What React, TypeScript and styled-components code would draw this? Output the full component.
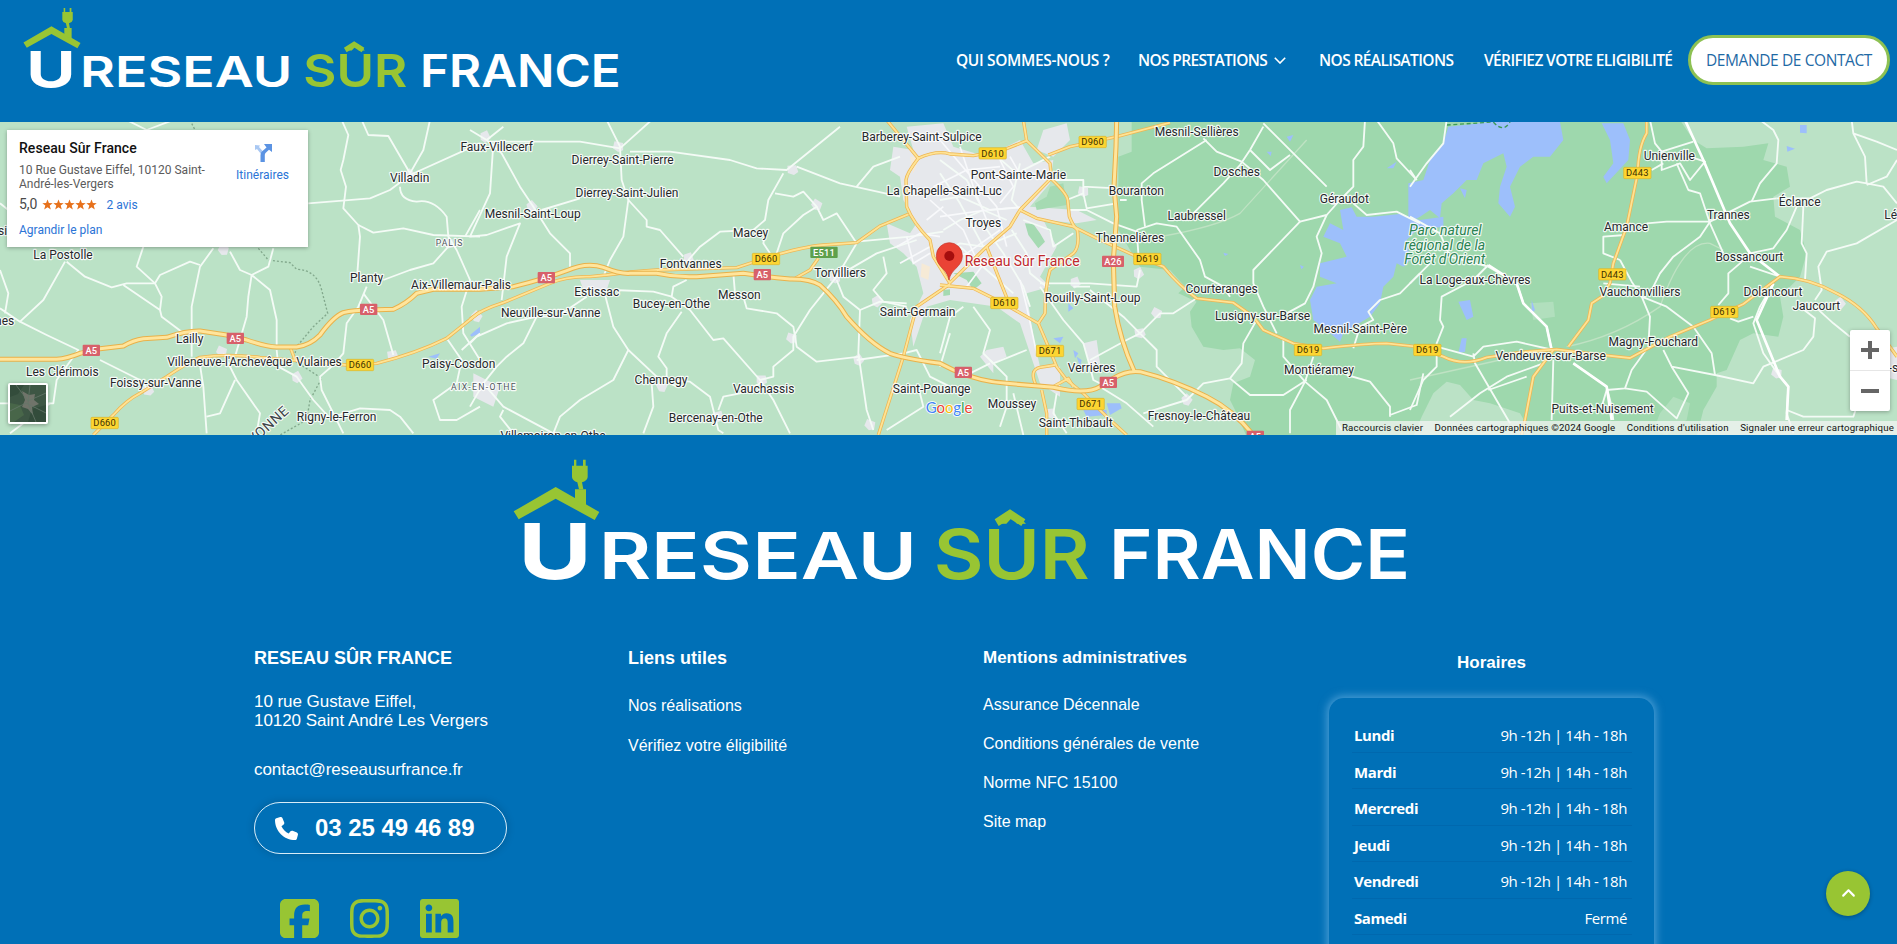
import React from "react";
import styled, { createGlobalStyle } from "styled-components";
import { FaSquareFacebook, FaInstagram, FaLinkedin, FaPhone, FaAngleUp } from "react-icons/fa6";

const BLUE = "#0070b7";
const GREEN = "#98c533";

const GlobalStyle = createGlobalStyle`
  * { box-sizing: border-box; }
  html, body { margin: 0; padding: 0; overflow: hidden; }
  body { background: ${BLUE}; font-family: "Liberation Sans", Arial, sans-serif; color: #fff; }
  a { color: inherit; text-decoration: none; }
`;

const Page = styled.div`
  position: relative;
  height: 944px;
  overflow: hidden;
  display: flex;
  flex-direction: column;
`;

/* ---------- header ---------- */

const Header = styled.header`
  flex: none;
  height: 122px;
  display: flex;
  justify-content: space-between;
  padding: 0 7px 0 23px;
  background: ${BLUE};
`;

const HeaderLogo = styled.div`
  padding-top: 7px;
`;

const LogoArt = styled.svg`
  display: block;
  overflow: visible;
`;

const Nav = styled.nav`
  display: flex;
  align-items: center;
  padding-bottom: 2px;
  font-family: "Open Sans", "Noto Sans", sans-serif;
  font-size: 15.5px;
  font-weight: 600;
`;

const NavLink = styled.a<{ $width: number; $spacing: number }>`
  display: flex;
  align-items: center;
  gap: 7px;
  width: ${(p) => p.$width}px;
  white-space: nowrap;
  letter-spacing: ${(p) => p.$spacing}px;
`;

const ContactButton = styled.a`
  display: flex;
  align-items: center;
  justify-content: center;
  width: 202px;
  height: 50px;
  border: 3px solid #8dc153;
  border-radius: 25px;
  background: #fff;
  color: #1f6aa5;
  font-weight: 400;
  white-space: nowrap;
  letter-spacing: -0.4px;
`;

/* ---------- map ---------- */

const MapFrame = styled.section`
  position: relative;
  flex: none;
  height: 313px;
  overflow: hidden;
  background: #bbe2c6;
  font-family: Roboto, sans-serif;
`;

const MapCanvas = styled.svg`
  display: block;
  width: 1897px;
  height: 313px;
`;

const PlaceCard = styled.div`
  position: absolute;
  left: 7px;
  top: 8px;
  width: 301px;
  height: 117px;
  padding: 10px 19px 0 12px;
  display: flex;
  justify-content: space-between;
  background: #fff;
  box-shadow: 0 1px 4px rgba(0, 0, 0, 0.3);
`;

const PlaceName = styled.div`
  font-size: 14px;
  line-height: 16px;
  font-weight: 500;
  color: #111;
  letter-spacing: 0.05px;
`;

const PlaceAddress = styled.div`
  width: 200px;
  margin-top: 7px;
  font-size: 12px;
  line-height: 14px;
  color: #5b5b5b;
`;

const Rating = styled.div`
  display: flex;
  align-items: center;
  margin-top: 5px;
  font-size: 14px;
  line-height: 17px;
  color: #4a4a4a;
`;

const Stars = styled.svg`
  width: 55px;
  height: 11px;
  margin: 0 10px 0 4px;
`;

const MapLink = styled.a`
  font-size: 12px;
  line-height: 14px;
  color: #2b74d6;
`;

const Enlarge = styled(MapLink)`
  display: block;
  margin-top: 10px;
`;

const Directions = styled.div`
  display: flex;
  flex-direction: column;
  align-items: center;
  gap: 6px;
  padding-top: 3px;
`;

const Thumb = styled.div`
  position: absolute;
  left: 8px;
  top: 261px;
  width: 40px;
  height: 41px;
  border: 2px solid #fff;
  border-radius: 2px;
  overflow: hidden;
  box-shadow: 0 1px 4px rgba(0, 0, 0, 0.35);
`;

const ZoomControl = styled.div`
  position: absolute;
  right: 7px;
  top: 208px;
  width: 40px;
  height: 81px;
  display: flex;
  flex-direction: column;
  background: #fff;
  border-radius: 2px;
  box-shadow: 0 1px 4px rgba(0, 0, 0, 0.3);
`;

const ZoomButton = styled.div`
  flex: 1;
  display: flex;
  align-items: center;
  justify-content: center;
  & + & { border-top: 1px solid #e6e6e6; }
`;

const Attribution = styled.div`
  position: absolute;
  right: 0;
  bottom: 0;
  width: 561px;
  height: 14px;
  padding: 0 3px 2px 6px;
  display: flex;
  justify-content: space-between;
  align-items: center;
  background: rgba(245, 245, 245, 0.72);
  color: #111;
  font-size: 9.7px;
  letter-spacing: 0.15px;
  white-space: nowrap;
`;

/* ---------- footer ---------- */

const Footer = styled.footer`
  flex: 1;
  background: ${BLUE};
`;

const FooterLogo = styled.div`
  padding: 23px 0 0 513px;
  height: 210px;
`;

const Columns = styled.div`
  display: grid;
  grid-template-columns: 374px 355px 346px 325px;
  padding-left: 254px;
  align-items: start;
`;

const Column = styled.div`
  display: flex;
  flex-direction: column;
  align-items: flex-start;
`;

const Heading = styled.h4<{ $size?: number }>`
  margin: 3px 0 0;
  font-size: ${(p) => p.$size ?? 17}px;
  line-height: 20px;
  font-weight: 700;
  white-space: nowrap;
`;

const Address = styled.p`
  margin: 24px 0 0;
  font-size: 17px;
  line-height: 19px;
  white-space: nowrap;
  letter-spacing: -0.05px;
`;

const Mail = styled.a`
  margin-top: 30px;
  font-size: 17px;
  line-height: 19px;
  letter-spacing: -0.05px;
`;

const PhonePill = styled.a`
  display: flex;
  align-items: center;
  width: 253px;
  height: 52px;
  margin-top: 23px;
  padding-left: 20px;
  gap: 17px;
  border: 1px solid #d7ecf8;
  border-radius: 26px;
  box-shadow: 0 0 8px rgba(0, 0, 0, 0.18);
  font-size: 24px;
  font-weight: 700;
  white-space: nowrap;
  letter-spacing: -0.05px;
`;

const Social = styled.div`
  display: flex;
  gap: 31px;
  margin: 42px 0 0 26px;
  color: ${GREEN};
  svg { width: 39px; height: 45px; display: block; }
`;

const Links = styled.div<{ $gap: number; $top: number }>`
  display: flex;
  flex-direction: column;
  margin-top: ${(p) => p.$top}px;
  gap: ${(p) => p.$gap}px;
  font-size: 16px;
  line-height: 19px;
  white-space: nowrap;
`;

const HoursColumn = styled.div`
  display: flex;
  flex-direction: column;
  align-items: center;
  padding-top: 5px;
`;

const HoursCard = styled.div`
  width: 325px;
  height: 320px;
  margin-top: 25px;
  padding: 18px 22px 0 23px;
  border-radius: 15px;
  box-shadow: 0 0 8px 2px rgba(150, 205, 245, 0.5);
  font-family: "Open Sans", "Noto Sans", sans-serif;
  font-size: 15px;
`;

const HoursRow = styled.div`
  display: flex;
  justify-content: space-between;
  align-items: center;
  height: 36.5px;
  padding: 3px 5px 0 2px;
  border-bottom: 1px solid rgba(0, 60, 120, 0.14);
  letter-spacing: -0.4px;
`;

const Day = styled.span`
  font-weight: 700;
`;

const ScrollTop = styled.a`
  position: absolute;
  left: 1826px;
  top: 871px;
  width: 44px;
  height: 45px;
  display: flex;
  align-items: center;
  justify-content: center;
  border-radius: 50%;
  background: ${GREEN};
  box-shadow: 0 1px 4px rgba(0, 0, 0, 0.3);
`;

/* ---------- logo ---------- */

function Logo({ width }: { width: number }) {
  return (
    <LogoArt width={width} height={(width * 126) / 896} viewBox="24 24 2688 378" fontFamily="Inter, sans-serif">
      <g fill={GREEN}>
        <path d="M26 184 L152 111 L283 186 L269 210 L152 146 L41 208 Z" />
        <path d="M210 150 V118 H243 V170 Z" />
        <path d="M207 29 H214 V47 H234 V29 H242 V47 H248 V82 Q246 93 231 97 L235 118 H222 L217 97 Q203 93 201 82 V47 H207 Z" />
        <path d="M1515 178 L1561 208 L1549 228 L1515 206 L1481 228 L1469 208 Z" />
      </g>
      <g fill="#fff">
        <text x="39" y="388" fontSize="230" fontWeight="700" textLength="222" lengthAdjust="spacingAndGlyphs">U</text>
        <text x="281" y="386" fontSize="193" fontWeight="600" textLength="955" lengthAdjust="spacingAndGlyphs">RESEAU</text>
        <text x="1812" y="386" fontSize="205" fontWeight="600" textLength="903" lengthAdjust="spacingAndGlyphs">FRANCE</text>
      </g>
      <text x="1286" y="386" fill={GREEN} fontSize="205" fontWeight="600" textLength="468" lengthAdjust="spacingAndGlyphs">SÛR</text>
    </LogoArt>
  );
}

/* ---------- map drawing: four tiles, three units per pixel ---------- */

const TILE = [0, 1410, 2820, 4230];

const MINOR: string[][] = [
  [
    "M1025 0 L1045 45 L1030 120 L1022 150 L1038 200 L1030 265 L1075 315 L1080 350 L1072 460",
    "M1085 0 L1105 45 L1165 48 L1230 160 L1270 90 L1290 0",
    "M1440 70 L1230 165 L1170 210 L1110 235 L925 250",
    "M1200 200 Q1200 240 1250 245 Q1300 235 1340 290 L1345 350 L1370 390 L1410 480 L1385 560 L1390 640 L1440 720",
    "M1075 315 L1120 338 L1210 325 L1300 345 L1440 350",
    "M1345 380 L1300 430 L1230 450 L1150 480 M1440 270 L1395 350",
    "M1100 500 L1075 560 L1040 610 L1030 700 L1000 735 L960 770 L965 810 L1030 940",
    "M1090 520 L1150 600 L1180 705",
    "M200 425 L255 470 L335 502 L380 490 L465 490 L480 465 L570 425 L600 435",
    "M195 425 L130 540 L60 605 L140 645 L235 690 L170 780 L160 850 L0 850",
    "M60 605 L0 565 M0 450 L25 520 L15 580",
    "M370 495 L480 570 L485 590 L545 635 M465 490 L485 530 L480 570 M430 380 L410 440 L465 490",
    "M640 385 L600 440 L575 560 L575 710",
    "M690 395 L720 450 L755 465 L745 530 L740 590 L705 710 M755 465 L810 510 L830 600 L830 680",
    "M755 465 L805 440 L820 385",
    "M300 720 L420 780 L445 810 M150 850 L30 940",
    "M600 735 L610 800 L620 940 M670 700 L710 780 L780 880 L770 940 M705 780 L660 880 L620 890",
    "M830 690 L835 740 L890 770 L940 840 L985 890",
    "M1000 890 L1080 865 L1170 870 L1200 890 L1240 940",
    "M1340 655 L1385 720 L1370 790 L1300 840 L1320 900 L1370 900 L1440 860",
    "M1440 640 L1385 690 M0 250 L25 270 M380 0 L440 30 L520 0",
  ],
  [
    "M0 30 L50 60 L95 100 L150 200 L190 260 L215 300 L240 340 L300 400 L300 440",
    "M50 60 L100 20 M60 65 L330 65 L450 85 L545 0 M410 0 L450 80 L455 180 L475 240 L460 350 L420 420 L400 470",
    "M480 95 L600 95 L780 120 L860 145 L950 150 L1110 20",
    "M940 160 L895 240 L885 300 L850 330 L750 335 L690 380 L655 420",
    "M980 140 L1110 190 L1290 230 M1160 200 L1210 140 L1290 110",
    "M915 220 L970 230 L1000 215 L1040 260 L1000 285 L940 340 L920 400 M885 340 L880 370 L900 400",
    "M1040 260 L1060 300 L1100 280 L1160 370 L1100 470 L1020 570 L970 650 L970 690 L910 740 L910 770 L870 780",
    "M1160 365 L1320 350 L1420 335 M1100 470 L1220 400 L1340 360",
    "M1100 480 L1120 530 L1170 570 L1165 700 L1190 870 L1210 930",
    "M1170 570 L1230 545 L1310 550 M1170 710 L1040 725 L980 680 L970 620 L920 580 L830 565 L820 530 L795 520 L790 460",
    "M1160 720 L1300 700 L1340 690 L1380 770 L1440 800",
    "M650 480 L610 500 L605 530 L660 570 L730 660 L760 655 L870 780 L910 840 L960 940",
    "M635 575 L590 640 L565 710 L590 745 L590 780 L660 785 L720 830 L745 930 L760 940",
    "M870 790 L810 820 L760 830 L745 870",
    "M400 505 L430 620 L475 690 L560 770 L620 800 M430 510 L550 515 L605 530",
    "M475 690 L430 780 L330 840 L270 890 L250 940",
    "M350 530 L260 590 L200 590 L160 670 L110 710 L80 740 L40 790",
    "M200 590 L110 610 L20 650 L0 670",
    "M40 790 L100 860 L250 940 M40 790 L0 860 M100 870 L90 890 L130 940",
    "M545 790 L550 860 L520 940",
    "M475 240 L530 300 L530 320 L570 330 L640 410 M215 270 L330 235",
    "M70 70 L60 220 L0 350 L50 345 L150 310 L110 410 L95 540",
    "M1345 800 L1360 860 L1250 930 M1410 740 L1440 640",
    "M1310 560 L1240 545 L1210 510 L1250 460 L1240 410",
  ],
  [
    "M800 60 L640 160 L605 190 L605 240 L615 320",
    "M790 55 L830 95 L905 125 L970 180 L1080 305 L940 450 L940 490 L970 560 L1010 640",
    "M970 10 L1160 200 M930 90 L970 20 M930 90 L990 150 L1050 105",
    "M930 90 L900 135 L850 190 L760 280",
    "M1080 305 L1160 285 L1200 240 L1240 200 L1240 120 L1270 80 L1275 0",
    "M1240 250 L1280 285 L1370 275 L1440 310",
    "M1160 285 L1130 350 L1145 400 L1120 500 L1095 550 L1040 580",
    "M1310 0 L1360 70 L1370 115 L1430 180",
    "M590 330 L650 310 L710 320 L780 420 L795 470 L850 500 L870 530",
    "M770 535 L700 580 L660 580 L600 640 L560 660 L450 720 M400 500 L450 500 M590 330 L595 400",
    "M950 600 L910 670 L905 730 L870 775 L790 790 L740 840 L610 880 M870 775 L930 825 L1030 825 L1100 780",
    "M1030 660 L1030 710 L1095 785 L1160 840 L1205 930 M1095 785 L1050 870 L1050 940 M1095 785 L1120 710",
    "M1220 765 L1290 785 L1350 860 L1350 890 M1350 885 L1430 855 L1450 760",
    "M1440 460 L1380 520 L1320 540 L1285 575 L1300 600 L1260 620 L1240 685",
    "M480 800 L560 850 L640 920 M300 500 L370 600 L430 670 L450 740 L460 780 L500 800",
    "M300 490 L450 490 L590 500 L600 450 M450 510 L550 590 L600 640 L650 690 L650 740 L740 830",
    "M240 130 L215 240 L240 270 M160 100 L230 160 L330 110 M0 120 L80 180 L130 270 L200 300",
    "M0 240 L60 230 L150 270 L240 262 M10 330 L60 300 L130 270 M0 400 L60 370 L130 380 L230 340",
    "M130 380 L60 250 L0 160 M120 300 L190 400 L250 500 L270 560 M60 380 L140 450 L220 520",
    "M340 180 L430 180 L430 220 L380 240 M430 220 L440 265 L530 250 M430 200 L530 205",
    "M385 270 L440 270 L520 310 L590 335 M540 240 L560 240",
    "M250 300 L330 330 L340 380 L400 340 M215 330 L260 400 L270 460 L320 500",
    "M70 560 L30 590 L0 700 M100 560 L150 630 L130 700 L160 730 L260 690",
    "M150 730 L90 760 M150 720 L200 770 L200 860 L180 920 M350 820 L340 880 L380 940 M220 820 L250 945",
  ],
  [
    "M110 0 L100 70 L50 130 L0 200 M0 290 L90 340 L120 410 L235 440 L320 490 L340 550 L410 620 L425 690",
    "M235 435 L190 480 L95 530 L90 600 L100 620 L80 670 L80 740 L40 780 L0 870",
    "M60 430 L0 490 M0 150 L20 180",
    "M720 0 L735 70 L755 95 L755 150 L810 130 L840 180 L885 125 L810 100",
    "M725 150 L760 130 M755 95 L850 65 M800 130 L835 210 L870 220 L900 310 L940 400",
    "M710 310 L770 305 L900 305 L1020 245 L1100 235 M900 305 L870 350 L790 410 L750 460 L720 520",
    "M1050 0 L1090 30 L1105 60 L1100 130 L1050 190 L1025 245",
    "M1100 235 L1200 235 L1250 210 L1340 185 L1370 190 L1365 110 L1330 40 L1325 0 M1370 190 L1420 200 L1461 250 M1330 40 L1400 65 L1461 90 M1370 195 L1430 170 L1461 120",
    "M1160 260 L1130 330 L1090 385 L1020 400 L990 430 L955 460 L955 520 L925 555",
    "M1180 260 L1175 370 L1190 400 L1185 480 M1461 300 L1340 370 L1250 395 L1225 440 L1235 510 L1215 540",
    "M1110 470 L1020 440 M1090 490 L1050 560 L1030 610 L1060 700 L1110 770 L1135 800 L1130 880 L1150 940",
    "M1170 560 L1215 595 L1210 650 L1180 690 L1060 740 L1030 790 L915 765 L785 740 L760 690",
    "M1215 560 L1270 610 L1320 650",
    "M960 595 L985 605 L1030 590",
    "M630 420 L665 485 L695 530 L720 590 L715 680 L665 750 L645 805 L590 810 M695 530 L770 560 L850 620 L905 700 L915 765",
    "M785 740 L835 820 L800 895 L710 815 L645 805 M580 490 L690 500",
    "M645 345 L580 350 L580 400 L630 420",
    "M490 730 L590 800 L605 860 L610 900 M590 810 L575 860 M430 720 L425 900",
    "M190 700 L195 730 L300 910 M190 710 L220 680 L320 665 L430 690 M80 680 L190 710",
    "M400 730 L290 770 L210 820 L120 890 M350 770 L235 810",
    "M1130 870 L1180 890 L1330 890 L1340 860",
  ],
];

const MAJOR: string[][] = [
  ["M280 945 L340 885 Q380 840 420 820 L500 770 Q560 730 600 712 Q680 700 780 712 L1040 735 L1130 730 Q1250 700 1340 655 L1440 575", "M870 680 L885 720"],
  [
    "M0 598 Q30 570 100 548 L240 490 Q290 468 360 470 L410 465 Q480 455 560 450 L800 443 L900 410 Q1000 380 1060 375 L1160 368 L1230 318 L1315 283",
    "M975 475 L1020 450 L1045 415",
    "M1250 0 L1345 115 Q1310 160 1308 180 L1310 260 Q1330 310 1380 360 L1390 410 L1440 490",
    "M1345 115 Q1400 90 1440 102 L1510 107 L1600 90 L1670 62 L1660 0",
    "M1225 945 L1300 710 L1340 560 L1440 492",
  ],
  [
    "M260 62 Q310 110 330 130 L335 178 Q380 220 383 240 L388 290 Q400 320 412 330 Q420 380 400 400 L330 450 Q315 500 315 580 L295 610",
    "M325 105 L390 80 L530 50 L690 8",
    "M330 178 L240 270 L210 320 L140 380 L28 490",
    "M0 495 L100 505 L190 550 L295 610 L325 680 L350 740 L380 780 L430 820 L500 890 L560 945",
    "M240 270 L290 295 L400 320 L470 355 L580 405 L670 440 Q720 500 770 535 L880 548 L940 590 L970 630 L1060 670 L1150 685 Q1280 670 1340 670 L1430 680 L1510 710 Q1570 740 1640 712 L1740 697 L1850 688 L1970 703 L2070 714 L2190 650 L2310 600 L2410 552 L2520 470 Q2610 475 2690 520 Q2770 560 2810 625 L2871 710",
    "M140 380 L175 470 L205 545",
    "M320 945 L320 880 L305 810 M290 800 Q265 750 300 742 L345 735 M340 800 L385 775 L400 800",
  ],
  [
    "M710 0 L710 40 Q685 80 683 160 L650 320 L610 430 L600 490 L575 530 L545 550 L535 600 L475 680",
    "M430 690 L370 770 L345 900 L335 945",
  ],
];

const MOTORWAY =
  "M0 718 L170 718 Q200 716 240 700 L300 686 L370 678 Q400 660 430 656 L500 652 Q560 632 600 633 L680 645 L740 660 Q800 680 830 681 L890 681 Q930 676 960 645 Q1000 590 1030 578 Q1060 570 1110 570 L1180 568 Q1220 550 1250 520 L1300 508 L1440 508 L1540 500 Q1640 475 1700 452 Q1760 425 1810 442 Q1860 462 1890 460 L1970 460 Q2030 473 2090 470 L2230 460 Q2310 472 2370 477 Q2430 476 2460 495 Q2510 540 2540 590 Q2610 670 2670 700 Q2710 715 2820 730 L2860 750 Q2940 785 3020 790 L3160 802 Q3260 825 3300 800 L3340 775 Q3380 750 3420 755 Q3520 780 3620 830 Q3700 870 3760 945 M3350 0 L3348 80 L3342 200 L3350 290 L3340 420 L3344 560 Q3360 660 3402 752";

type Spot = [tile: number, x: number, y: number, name: string];

const TOWNS: Spot[] = [
  [0, 1229, 186, "Villadin"], [0, 1100, 485, "Planty"], [0, 689, 739, "Villeneuve-l'Archevêque"], [0, 957, 739, "Vulaines"],
  [0, 187, 768, "Les Clérimois"], [0, 467, 801, "Foissy-sur-Vanne"], [0, 569, 670, "Lailly"], [0, 189, 417, "La Postolle"],
  [0, 1010, 902, "Rigny-le-Ferron"], [0, 14, 615, "nes"], [0, 8, 344, "si"],
  [1, 80, 93, "Faux-Villecerf"], [1, -27, 507, "Aix-Villemaur-Palis"], [1, -34, 744, "Paisy-Cosdon"],
  [1, 458, 132, "Dierrey-Saint-Pierre"], [1, 471, 231, "Dierrey-Saint-Julien"], [1, 188, 294, "Mesnil-Saint-Loup"],
  [1, 842, 351, "Macey"], [1, 662, 444, "Fontvannes"], [1, 1110, 471, "Torvilliers"], [1, 380, 528, "Estissac"],
  [1, 808, 537, "Messon"], [1, 604, 564, "Bucey-en-Othe"], [1, 242, 591, "Neuville-sur-Vanne"], [1, 573, 792, "Chennegy"],
  [1, 881, 818, "Vauchassis"], [1, 737, 905, "Bercenay-en-Othe"], [1, 249, 959, "Villemoiron-en-Othe"],
  [1, 1355, 63, "Barberey-Saint-Sulpice"], [1, 1423, 225, "La Chapelle-Saint-Luc"], [1, 1343, 588, "Saint-Germain"],
  [1, 1385, 818, "Saint-Pouange"],
  [2, 235, 177, "Pont-Sainte-Marie"], [2, 130, 321, "Troyes"], [2, 589, 225, "Bouranton"], [2, 770, 48, "Mesnil-Sellières"],
  [2, 890, 168, "Dosches"], [2, 1213, 249, "Géraudot"], [2, 770, 300, "Laubressel"], [2, 570, 366, "Thennelières"],
  [2, 845, 519, "Courteranges"], [2, 458, 546, "Rouilly-Saint-Loup"], [2, 968, 600, "Lusigny-sur-Barse"],
  [2, 1261, 639, "Mesnil-Saint-Père"], [2, 455, 756, "Verrières"], [2, 1137, 762, "Montiéramey"], [2, 216, 864, "Moussey"],
  [2, 777, 900, "Fresnoy-le-Château"], [2, 407, 921, "Saint-Thibault"],
  [3, 778, 120, "Unienville"], [3, 1169, 258, "Éclance"], [3, 955, 297, "Trannes"], [3, 648, 333, "Amance"],
  [3, 1018, 423, "Bossancourt"], [3, 195, 492, "La Loge-aux-Chèvres"], [3, 690, 528, "Vauchonvilliers"],
  [3, 1089, 528, "Dolancourt"], [3, 1219, 570, "Jaucourt"], [3, 730, 678, "Magny-Fouchard"],
  [3, 422, 720, "Vendeuvre-sur-Barse"], [3, 578, 879, "Puits-et-Nuisement"], [3, 1442, 297, "Lé"], [3, 1450, 756, "-s"],
];

const SHIELDS: Spot[] = [
  [0, 1080, 735, "D660"], [0, 314, 909, "D660"], [1, 888, 417, "D660"], [0, 274, 691, "A5"], [0, 706, 655, "A5"],
  [0, 1106, 568, "A5"], [1, 229, 473, "A5"], [1, 877, 464, "A5"], [2, 70, 757, "A5"], [2, 505, 787, "A5"], [2, 946, 949, "A5"],
  [1, 1062, 397, "E511"], [2, 158, 100, "D610"], [2, 193, 549, "D610"], [2, 458, 66, "D960"], [2, 519, 424, "A26"],
  [2, 622, 417, "D619"], [2, 330, 693, "D671"], [2, 452, 852, "D671"], [2, 1104, 690, "D619"], [3, 682, 159, "D443"],
  [3, 607, 463, "D443"], [3, 943, 576, "D619"], [3, 52, 690, "D619"],
];

const VILLAGES: [tile: number, x: number, y: number][] = [
  [0, 445, 812], [0, 665, 695], [0, 890, 772], [0, 1345, 370], [0, 1230, 165], [0, 1178, 706],
  [0, 670, 390], [1, 45, 50], [1, 445, 80], [1, 185, 260], [1, 968, 150], [1, 1040, 255], [1, 655, 415],
  [1, 965, 655], [1, 1165, 720], [1, 875, 780], [1, 575, 800], [1, 745, 890], [1, 1200, 915],
  [1, 1220, 545], [1, 1095, 475], [1, 20, 590], [2, 600, 640], [2, 650, 580], [2, 595, 460], [2, 430, 215],
  [2, 740, 840], [2, 330, 880], [2, 1180, 240], [2, 405, 488], [3, 1100, 760], [3, 1290, 550],
];

function Shield({ spot }: { spot: Spot }) {
  const [tile, x, y, name] = spot;
  const local = name[0] === "D";
  const w = name.length === 4 ? 82 : name.length === 3 ? 66 : 52;
  const fill = local ? "#fdd532" : name[0] === "E" ? "#5ea04c" : "#d7606a";
  return (
    <g transform={`translate(${TILE[tile] + x} ${y})`}>
      <rect x={-w / 2} y={-17} width={w} height={34} rx={3} fill={fill} stroke={local ? "#d9b52a" : fill} strokeWidth={local ? 2 : 0} />
      <text y={10} textAnchor="middle" fontSize={28} fontWeight={local ? 400 : 500} letterSpacing={0.6} fill={local ? "#3d3000" : "#fff"}>{name}</text>
    </g>
  );
}

function MapDrawing() {
  return (
    <MapCanvas viewBox="0 6 5691 939" preserveAspectRatio="none" fontFamily="Roboto, sans-serif">
      <g fill="#9ed8ad">
        <path d="M3395 0 L3395 95 L3355 110 L3355 330 L3420 440 L3510 450 L3555 500 L3535 520 L3590 545 L3570 575 L3575 620 L3610 680 L3670 690 L3720 685 L3765 720 L3750 770 L3700 790 L3690 840 L3710 880 L3740 950 L4240 950 L4265 890 L4300 820 L4340 785 L4380 795 L4420 840 L4470 850 L4560 880 L4600 950 L5090 950 L5110 870 L5150 800 L5150 760 L5180 750 L5220 660 L5260 640 L5335 650 L5350 590 L5340 530 L5400 470 L5420 400 L5400 330 L5325 290 L5320 230 L5370 200 L5360 140 L5290 120 L5305 70 L5230 80 L5120 85 L5080 60 L5040 0 Z" />
      </g>
      <path d="M4980 880 L5020 830 L5070 850 L5060 900 L5000 945 L4960 930 Z M4590 550 L4660 545 L4665 590 L4600 600 Z" fill="#b1dfbd" />
      <g fill="#e6e8ec">
        <path d="M2720 20 L2830 10 L2860 80 L2960 110 L3060 60 L3100 130 L3160 120 L3150 190 L3090 260 L3230 270 L3290 300 L3230 310 L3130 300 L3170 380 L3120 470 L3150 500 L3080 520 L3100 650 L3120 740 L3180 740 L3180 830 L3120 790 L3060 610 L2990 560 L2850 540 L2780 560 L2740 680 L2730 600 L2770 520 L2750 440 L2710 400 L2670 370 L2660 310 L2730 340 L2750 310 L2710 240 L2700 170 L2670 150 L2680 80 L2740 90 Z" />
        <path d="M1740 480 L1830 480 L1820 510 L1750 510 Z M1420 760 L1500 800 L1480 860 L1420 830 Z M3130 30 L3200 10 L3210 60 L3160 110 L3110 90 Z M2960 690 L3010 680 L3020 710 L2980 730 L2980 760 L2940 710 Z M3250 670 L3290 660 L3300 730 L3270 740 Z M5640 690 L5691 680 L5691 780 L5650 770 Z" />
        {VILLAGES.map(([t, x, y], i) => (
          <path key={i} transform={`translate(${TILE[t] + x} ${y}) rotate(${(i * 37) % 90}) scale(0.8)`} d="M-22 -12 L10 -20 L22 4 L8 18 L-16 14 Z" />
        ))}
      </g>
      <path d="M3075 310 L3100 312 L3120 340 L3135 365 L3115 385 L3085 345 Z M3105 250 L3140 230 L3150 200 L3190 190 L3200 255 L3110 270 Z" fill="#a5dab2" />
      <path d="M2860 460 L2920 455 L2945 490 L2920 510 L2900 480 Z M2830 510 L2850 508 L2850 525 L2830 528 Z" fill="#a5dab2" />
      <path d="M2765 430 L2790 440 L2785 480 L2762 470 Z M2730 110 L2760 110 L2740 160 Z" fill="#f6ead6" />
      <g fill="#9dbffb">
        <path d="M4345 20 L4420 12 L4470 6 L4680 6 L4690 60 L4650 110 L4600 110 L4560 140 L4530 200 L4545 260 L4530 290 L4495 250 L4500 200 L4520 140 L4510 100 L4450 130 L4430 180 L4400 180 L4360 220 L4325 250 L4320 295 L4290 270 L4260 290 L4225 310 L4225 190 L4270 180 L4290 120 L4330 70 Z" />
        <path d="M4805 10 L4870 10 L4890 60 L4885 120 L4820 190 L4810 170 L4840 130 L4830 60 Z" />
        <path d="M4020 270 L4055 262 L4070 290 L4120 290 L4200 282 L4260 300 L4330 290 L4330 320 L4250 330 L4220 360 L4230 420 L4210 440 L4190 430 L4180 470 L4150 500 L4140 550 L4110 590 L4060 620 L4030 640 L4020 665 L3990 640 L3940 600 L3930 540 L3950 500 L4010 490 L3960 470 L3960 430 L4040 410 L4020 370 L3970 350 L3990 310 L4030 330 Z" />
        <path d="M4375 545 L4410 540 L4420 590 L4400 600 Z M4595 540 L4605 570 L4595 580 Z M4385 655 L4400 655 L4395 695 L4375 700 Z M5400 15 L5420 15 L5420 40 L5400 38 Z M5360 78 L5385 86 L5362 95 Z M4380 205 L4400 210 L4395 235 Z" />
        <path d="M3320 850 L3360 850 L3365 865 L3330 885 Z M3250 870 L3320 870 L3320 885 L3260 890 Z M3220 690 L3235 700 L3225 715 Z M3160 655 L3190 650 L3180 670 Z M3205 550 L3220 565 L3205 575 Z M3230 710 L3245 720 L3240 740 Z" />
        <path d="M1440 620 L1410 645 L1415 650 L1440 640 Z M1285 710 L1320 700 L1310 716 Z M4160 145 L4190 125 L4180 145 Z M3860 50 L3880 45 L3870 65 Z M3800 95 L3815 95 L3812 108 Z M3900 435 L3912 440 L3904 448 Z M3670 398 L3685 402 L3675 408 Z" />
      </g>
      <path d="M4230 780 L4500 720 M4700 680 Q4850 650 4980 560 Q5050 360 5130 370 L5170 390 M3480 350 Q3650 320 3720 280 L3920 60" fill="none" stroke="#bfe2c3" strokeWidth="4" />
      <path d="M570 0 L600 60 M775 385 L805 420 L870 428 L890 448 Q950 450 965 510 L983 580 L940 620 L890 680 L880 720 L965 775 L930 840 L920 900 L840 945" fill="none" stroke="#82a88c" strokeWidth="4" strokeDasharray="6 6" />
      <path d="M4340 15 L4420 10 L4480 6 Q4510 40 4530 6" fill="none" stroke="#3f9a5a" strokeWidth="4" strokeDasharray="12 8" />

      {MINOR.map((paths, t) => (
        <g key={t} transform={`translate(${TILE[t]} 0)`} fill="none" stroke="#f4fbf6" strokeWidth={5.5} strokeLinejoin="round">
          {paths.map((d) => <path key={d} d={d} />)}
        </g>
      ))}
      <path d="M5055 0 L5110 120 L5190 310 L5250 400 L5340 470 M4465 435 L4550 490 L4570 550 L4640 620 L4655 690 M4720 730 L4820 800 L4835 900 M5320 490 L5270 600 L5340 770 L5365 800 L5360 900" fill="none" stroke="#fff" strokeWidth="8" strokeLinejoin="round" />
      <g fill="none" stroke="#f8f9fb" strokeWidth="5">
        <path d="M2820 60 L2990 260 L3020 380 M2880 80 L2920 200 L2960 300 M2800 200 L2900 150 L3000 140 M2820 290 L2960 270 L3060 262 M2830 420 L2900 400 L3000 330 M2790 240 L2890 330 L2930 420 M2900 500 L2960 420 L3010 410 M2690 380 L2760 340 L2820 350 M2700 430 L2790 380 M2720 350 L2740 430 L2790 400 M2780 300 L2830 260 M3000 120 L3040 200 L3000 250 M3030 110 L3070 180 M3060 480 L3080 560 L3110 700" />
      </g>
      {[["#edb653", 10], ["#ffe394", 5.5]].map(([color, w]) => (
        <g key={color} fill="none" stroke={color} strokeWidth={w} strokeLinejoin="round">
          {MAJOR.map((paths, t) => (
            <g key={t} transform={`translate(${TILE[t]} 0)`}>{paths.map((d) => <path key={d} d={d} />)}</g>
          ))}
        </g>
      ))}
      <path d={MOTORWAY} fill="none" stroke="#e9b14a" strokeWidth="15" strokeLinejoin="round" />
      <path d={MOTORWAY} fill="none" stroke="#ffe59c" strokeWidth="9" strokeLinejoin="round" />

      <g fill="#26282b" fontSize="36" textAnchor="middle" stroke="#fff" strokeOpacity="0.85" strokeWidth="7" strokeLinejoin="round" paintOrder="stroke">
        {TOWNS.map(([t, x, y, name]) => <text key={name} x={TILE[t] + x} y={y}>{name}</text>)}
        <g fontSize="26" fill="#50565c">
          <text x="1349" y="378" letterSpacing="3">PALIS</text>
          <text x="1452" y="810" letterSpacing="4">AIX-EN-OTHE</text>
        </g>
        <text transform="translate(815 925) rotate(-42)" fontSize="42" fill="#3d4347" letterSpacing="2">YONNE</text>
        <g fontSize="42" fontStyle="italic" fill="#2a8352">
          <text x="4336" y="346">Parc naturel</text>
          <text x="4334" y="389">régional de la</text>
          <text x="4334" y="431">Forêt d'Orient</text>
        </g>
      </g>
      {SHIELDS.map((s) => <Shield key={s.join("-")} spot={s} />)}

      <path d="M2847 480 C2842 445 2809 442 2809 407 A39 39 0 0 1 2887 407 C2887 442 2853 445 2847 480 Z" fill="#ea4335" stroke="#c5352a" strokeWidth="2" />
      <circle cx="2848" cy="408" r="15" fill="#a50e0e" />
      <text x="2894" y="438" fontSize="42" fill="#c0282d" stroke="#fff" strokeWidth="7" strokeOpacity="0.85" paintOrder="stroke" textLength="345">Reseau Sûr France</text>
      <text x="2777" y="878" fontFamily="Lato, sans-serif" fontSize="45" fontWeight="400" textLength="140" stroke="#fff" strokeWidth="5" paintOrder="stroke">
        <tspan fill="#4285f4">G</tspan><tspan fill="#ea4335">o</tspan><tspan fill="#fbbc05">o</tspan><tspan fill="#4285f4">g</tspan><tspan fill="#34a853">l</tspan><tspan fill="#ea4335">e</tspan>
      </text>
    </MapCanvas>
  );
}

function MapSection() {
  return (
    <MapFrame>
      <MapDrawing />
      <PlaceCard>
        <div>
          <PlaceName>Reseau Sûr France</PlaceName>
          <PlaceAddress>10 Rue Gustave Eiffel, 10120 Saint-André-les-Vergers</PlaceAddress>
          <Rating>
            5,0
            <Stars viewBox="0 0 55 11" fill="#e7711b">
              {[0, 1, 2, 3, 4].map((i) => (
                <path key={i} transform={`translate(${i * 11} 0)`} d="M5.5 0.4 L6.9 4 L10.7 4.2 L7.7 6.6 L8.8 10.4 L5.5 8.2 L2.2 10.4 L3.3 6.6 L0.3 4.2 L4.1 4 Z" />
              ))}
            </Stars>
            <MapLink>2 avis</MapLink>
          </Rating>
          <Enlarge>Agrandir le plan</Enlarge>
        </div>
        <Directions>
          <svg width="18" height="19" viewBox="0 0 18 19">
            <path d="M1 2 L6 2.5 L5 4 L9.5 9 L7 11 L3 6 L1 7 Z" fill="#a9c8f3" />
            <path d="M6.5 19 V12 Q6.500 9.500 8.500 8 L12.500 4.500 L10 1 H18 V9 L15 6.700 L11.500 10 Q10.800 11 10.800 12 V19 Z" fill="#5b93e3" />
          </svg>
          <MapLink>Itinéraires</MapLink>
        </Directions>
      </PlaceCard>
      <Thumb>
        <svg width="36" height="37" viewBox="0 0 36 37">
          <rect width="36" height="37" fill="#3d5644" />
          <path d="M0 0 H14 L8 9 L0 12 Z M22 24 L36 20 V37 H18 Z" fill="#334c3b" />
          <path d="M0 18 L10 20 L14 30 L4 37 H0 Z" fill="#486649" />
          <path d="M12 6 L19 10 L25 9 L24 15 L29 19 L22 22 L23 30 L18 24 L12 22 L15 15 Z" fill="#70746a" />
          <path d="M0 26 L16 18 L36 28 M20 0 L18 18 L26 37 M6 0 L18 16 L36 8" stroke="#65776a" strokeWidth="0.8" fill="none" />
        </svg>
      </Thumb>
      <ZoomControl>
        <ZoomButton><svg width="18" height="18"><path d="M7 0h4v7h7v4h-7v7H7v-7H0V7h7z" fill="#666" /></svg></ZoomButton>
        <ZoomButton><svg width="18" height="4"><rect width="18" height="4" fill="#666" /></svg></ZoomButton>
      </ZoomControl>
      <Attribution>
        <span>Raccourcis clavier</span>
        <span>Données cartographiques ©2024 Google</span>
        <span>Conditions d'utilisation</span>
        <span>Signaler une erreur cartographique</span>
      </Attribution>
    </MapFrame>
  );
}

const HOURS = [
  ["Lundi", "9h -12h | 14h - 18h"],
  ["Mardi", "9h -12h | 14h - 18h"],
  ["Mercredi", "9h -12h | 14h - 18h"],
  ["Jeudi", "9h -12h | 14h - 18h"],
  ["Vendredi", "9h -12h | 14h - 18h"],
  ["Samedi", "Fermé"],
];

export default function App() {
  return (
    <Page>
      <GlobalStyle />
      <Header>
        <HeaderLogo><Logo width={597} /></HeaderLogo>
        <Nav>
          <NavLink $width={182} $spacing={-0.35}>QUI SOMMES-NOUS ?</NavLink>
          <NavLink $width={181} $spacing={-0.65}>
            NOS PRESTATIONS
            <svg width="12" height="7" viewBox="0 0 12 7">
              <path d="M0.800 0.800 L6 6 L11.200 0.800" fill="none" stroke="#fff" strokeWidth="1.6" />
            </svg>
          </NavLink>
          <NavLink $width={165} $spacing={-0.6}>NOS RÉALISATIONS</NavLink>
          <NavLink $width={204} $spacing={-0.6}>VÉRIFIEZ VOTRE ELIGIBILITÉ</NavLink>
          <ContactButton>DEMANDE DE CONTACT</ContactButton>
        </Nav>
      </Header>
      <MapSection />
      <Footer>
        <FooterLogo><Logo width={896} /></FooterLogo>
        <Columns>
          <Column>
            <Heading $size={18}>RESEAU SÛR FRANCE</Heading>
            <Address>10 rue Gustave Eiffel,<br />10120 Saint André Les Vergers</Address>
            <Mail>contact@reseausurfrance.fr</Mail>
            <PhonePill><FaPhone size={23} />03 25 49 46 89</PhonePill>
            <Social><FaSquareFacebook /><FaInstagram /><FaLinkedin /></Social>
          </Column>
          <Column>
            <Heading $size={18}>Liens utiles</Heading>
            <Links $gap={21} $top={28}>
              <a>Nos réalisations</a>
              <a>Vérifiez votre éligibilité</a>
            </Links>
          </Column>
          <Column>
            <Heading>Mentions administratives</Heading>
            <Links $gap={20} $top={27}>
              <a>Assurance Décennale</a>
              <a>Conditions générales de vente</a>
              <a>Norme NFC 15100</a>
              <a>Site map</a>
            </Links>
          </Column>
          <HoursColumn>
            <Heading>Horaires</Heading>
            <HoursCard>
              {HOURS.map(([day, time]) => (
                <HoursRow key={day}><Day>{day}</Day><span>{time}</span></HoursRow>
              ))}
            </HoursCard>
          </HoursColumn>
        </Columns>
      </Footer>
      <ScrollTop><FaAngleUp size={17} /></ScrollTop>
    </Page>
  );
}
